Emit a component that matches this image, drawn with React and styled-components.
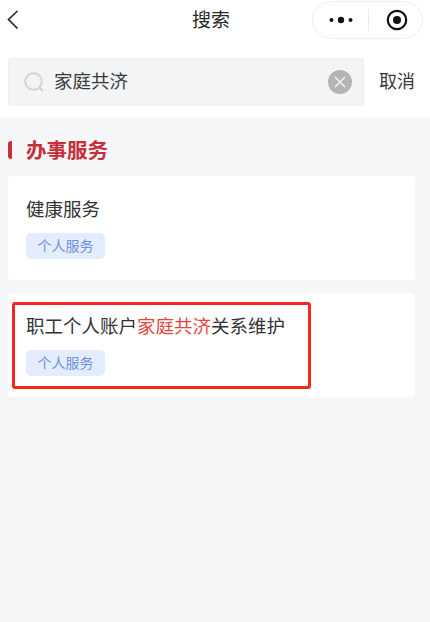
import React from "react";
import styled, { createGlobalStyle } from "styled-components";

const Global = createGlobalStyle`
  html, body { margin: 0; padding: 0; background: #f5f6f8; }
  body { font-family: "Liberation Sans", "Noto Sans CJK SC", sans-serif; }
`;
const Page = styled.div`
  width: 430px; height: 622px; overflow: hidden; background: #f5f6f8;
`;
const Top = styled.div`background: #fff; height: 117px;`;
const NavBar = styled.div`
  position: relative; height: 40px; padding: 0 7px 0 6px;
  display: flex; align-items: center; justify-content: space-between;
`;
const NavTitle = styled.div`
  position: absolute; left: 0; right: 8px; top: 8px; text-align: center;
  font-size: 19px; line-height: 26px; color: #2a2a2a;
`;
const Capsule = styled.div`
  width: 111px; height: 38px; box-sizing: border-box; margin-top: -1px;
  border: 1px solid #f1f1f2; border-radius: 19px;
  display: flex; align-items: center;
`;
const CapsuleSide = styled.div`
  height: 100%; display: flex; align-items: center; justify-content: center;
  flex: ${(p) => (p.$width ? `0 0 ${p.$width}px` : "1")};
  padding-left: ${(p) => p.$inset || 0}px;
`;
const CapsuleLine = styled.div`width: 1px; height: 22px; background: #eaeaea;`;
const SearchRow = styled.div`
  display: flex; align-items: center; margin-top: 18px; padding: 0 15px 0 8px;
  justify-content: space-between;
`;
const SearchBox = styled.div`
  width: 356px; height: 48px; box-sizing: border-box; background: #f2f4f5;
  border: 1px solid #eef0f2; border-radius: 3px;
  display: flex; align-items: center; padding: 0 11px 0 15px;
`;
const Query = styled.div`
  flex: 1; margin-left: 10px; font-size: 18.5px; color: #3a3a3a; line-height: 26px;
`;
const Cancel = styled.div`font-size: 18px; color: #3a3a3a; line-height: 26px;`;
const Heading = styled.div`
  display: flex; align-items: center; margin-top: 19px; height: 26px; padding-left: 8px; gap: 14px;
  color: #c5303a; font-size: 20.5px; font-weight: 700;
`;
const HeadingMark = styled.span`
  width: 4px; height: 18px; margin-top: 2px; background: #c5303a; border-radius: 3px 1px 1px 3px;
`;
const List = styled.div`
  display: flex; flex-direction: column; gap: 13.5px; margin-top: 14px; padding: 0 15px 0 8px;
`;
const Card = styled.div`
  height: 103.5px; box-sizing: border-box; background: #fff; border-radius: 4px;
  padding: 21px 18px 0; position: relative;
`;
const CardTitle = styled.div`font-size: 18.5px; line-height: 26px; color: #333;`;
const Hit = styled.span`color: #e5453c;`;
const Tag = styled.div`
  margin-top: 10px; width: 79px; height: 26px; border-radius: 5px; background: #e3edfd;
  color: #6f90dc; font-size: 14px; line-height: 26px; text-align: center;
`;
const Highlight = styled.div`
  position: absolute; left: 4px; top: 9px; width: 299px; height: 87px; box-sizing: border-box;
  border: 3px solid #f5281d; border-radius: 3px;
`;

export default function App() {
  return (
    <Page>
      <Global />
      <Top>
        <NavBar>
          <svg width="14" height="22" viewBox="0 0 14 22">
            <path d="M11.5 2 L2.5 10.5 L11.5 19.5" fill="none" stroke="#2a2a2a" strokeWidth="1.7" />
          </svg>
          <NavTitle>搜索</NavTitle>
          <Capsule>
            <CapsuleSide $width={55}>
              <svg width="24" height="8" viewBox="0 0 24 8">
                <circle cx="2.5" cy="4" r="2" fill="#111" />
                <circle cx="12" cy="4" r="3.2" fill="#111" />
                <circle cx="21.5" cy="4" r="2" fill="#111" />
              </svg>
            </CapsuleSide>
            <CapsuleLine />
            <CapsuleSide $inset={2}>
              <svg width="22" height="22" viewBox="0 0 22 22">
                <circle cx="11" cy="11" r="9.2" fill="none" stroke="#111" strokeWidth="2.2" />
                <circle cx="11" cy="11" r="4" fill="#111" />
              </svg>
            </CapsuleSide>
          </Capsule>
        </NavBar>
        <SearchRow>
          <SearchBox>
            <svg width="20" height="20" viewBox="0 0 20 20">
              <circle cx="9.5" cy="9.5" r="8.3" fill="none" stroke="#d2d4d4" strokeWidth="2" />
              <path d="M15.5 15.5 L18.5 18.5" stroke="#d2d4d4" strokeWidth="2" strokeLinecap="round" />
            </svg>
            <Query>家庭共济</Query>
            <svg width="24" height="24" viewBox="0 0 24 24">
              <circle cx="12" cy="12" r="12" fill="#b4b4b4" />
              <path d="M7 7 L17 17 M17 7 L7 17" stroke="#f2f2f2" strokeWidth="1.6" />
            </svg>
          </SearchBox>
          <Cancel>取消</Cancel>
        </SearchRow>
      </Top>
      <Heading>
        <HeadingMark />
        办事服务
      </Heading>
      <List>
        <Card>
          <CardTitle>健康服务</CardTitle>
          <Tag>个人服务</Tag>
        </Card>
        <Card>
          <CardTitle>
            职工个人账户<Hit>家庭共济</Hit>关系维护
          </CardTitle>
          <Tag>个人服务</Tag>
          <Highlight />
        </Card>
      </List>
    </Page>
  );
}
